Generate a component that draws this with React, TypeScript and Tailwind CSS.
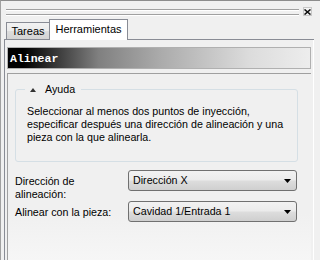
import React from 'react';

const FONT = { fontFamily: '"Liberation Sans", Arial, sans-serif' };

function Gripper() {
  return (
    <div className="flex-1 flex flex-col gap-[3px] pt-[8px]">
      <div className="h-[2px] border-t border-[#a0a0a0] border-b border-b-white" />
      <div className="h-[2px] border-t border-[#a0a0a0] border-b border-b-white" />
    </div>
  );
}

function Combo({ value }: { value: string }) {
  return (
    <div className="w-[169px] h-[21px] flex items-center justify-between pl-[4px] pr-[5px] border border-[#707070] rounded-[3px] bg-[linear-gradient(to_bottom,#f2f2f2_0%,#ebebeb_48%,#dddddd_52%,#cfcfcf_100%)] text-[10.7px] text-black">
      <span>{value}</span>
      <svg width="7" height="4" viewBox="0 0 7 4">
        <path d="M0 0h7L3.5 4z" fill="#000" />
      </svg>
    </div>
  );
}

export default function App() {
  return (
    <div
      className="w-[320px] h-[260px] bg-[#f0f0f0] border-t border-[#8c8c8c] border-l border-l-[#a0a0a0] flex flex-col overflow-hidden"
      style={FONT}
    >
      {/* Gripper + close */}
      <div className="h-[18px] flex items-start pl-[5px] pr-[8px]">
        <Gripper />
        <button className="mt-[6px] ml-[4px] w-[9px] h-[9px] flex items-center justify-center border border-[#c8c8c8] bg-[#f4f4f4]">
          <svg width="7" height="6" viewBox="0 0 7 6">
            <path d="M0.5 0.5l6 5M6.5 0.5l-6 5" stroke="#111" strokeWidth="1.6" />
          </svg>
        </button>
      </div>

      {/* Tabs */}
      <div className="ml-[3px] w-[310px] h-[21px] flex items-end pl-[2px] border-b border-[#898c95]">
        <div className="w-[44px] h-[17px] flex items-center justify-center border border-b-0 border-[#898c95] bg-[linear-gradient(to_bottom,#f2f2f2_0%,#ebebeb_50%,#dddddd_50%,#d4d4d4_100%)] text-[11px] text-black pt-[1px]">
          Tareas
        </div>
        <div className="-ml-[1px] -mb-[1px] w-[79px] h-[21px] flex items-center justify-center border border-b-0 border-[#898c95] bg-white text-[11px] text-black pb-[1px]">
          Herramientas
        </div>
      </div>

      {/* Panel */}
      <div className="ml-[3px] w-[310px] flex-1 flex flex-col border-l border-[#898c95] border-r border-r-white pl-[2px] pt-[7px]">
        <div
          className="w-[304px] h-[22px] flex items-center pl-[2px] pt-[2px] border border-[#b0b0b0] bg-[linear-gradient(to_right,#000_0%,#000_5%,#808080_30%,#aaaaaa_50%,#dcdcdc_80%,#ededed_100%)] text-white text-[11.5px] font-bold"
          style={{ fontFamily: '"Liberation Mono", "Courier New", monospace' }}
        >
          Alinear
        </div>

        <div className="mt-[4px] w-[304px] flex-1 border-t border-l border-[#a0a0a0] bg-[linear-gradient(to_bottom,#f0f0f0_0%,#f0f0f0_75%,#f6f6f6_100%)] pl-[7px] flex flex-col">
          <fieldset className="mt-[9px] w-[283px] border border-[#d5dfe5] rounded-[3px] pl-[11px] pt-[9px] pb-[17px]">
            <legend className="-ml-[2px] px-[5px] flex items-center gap-[9px] text-[10.7px] text-black leading-[13px]">
              <svg width="6" height="4" viewBox="0 0 6 4">
                <path d="M0 4h6L3 0z" fill="#333" />
              </svg>
              <span className="pr-[1px]">Ayuda</span>
            </legend>
            <p className="text-[10.7px] leading-[13px] text-black">
              Seleccionar al menos dos puntos de inyección,
              <br />
              especificar después una dirección de alineación y una
              <br />
              pieza con la que alinearla.
            </p>
          </fieldset>

          <div className="mt-[8px] flex flex-col">
            <div className="flex items-start">
              <div className="w-[113px] pt-[5px] text-[10.7px] leading-[13px] text-black">
                Dirección de
                <br />
                alineación:
              </div>
              <Combo value="Dirección X" />
            </div>
            <div className="flex items-start">
              <div className="w-[113px] pt-[5px] text-[10.7px] leading-[13px] text-black">
                Alinear con la pieza:
              </div>
              <Combo value="Cavidad 1/Entrada 1" />
            </div>
          </div>
        </div>
      </div>
    </div>
  );
}
